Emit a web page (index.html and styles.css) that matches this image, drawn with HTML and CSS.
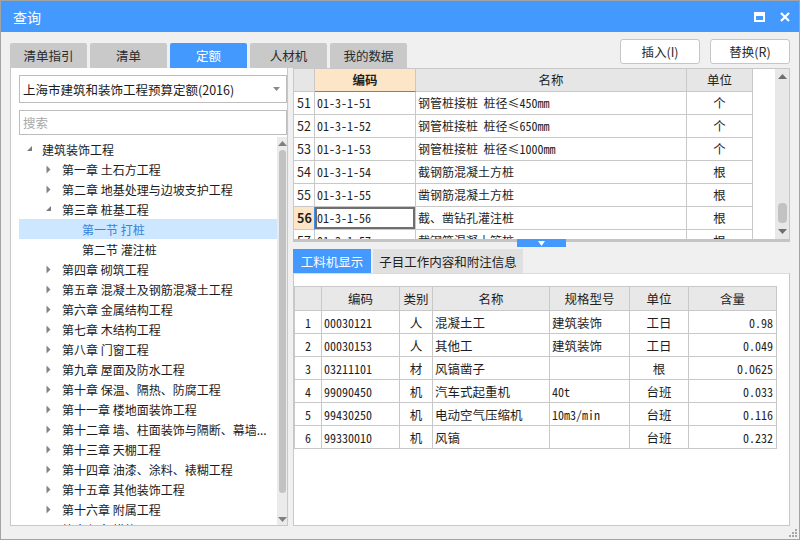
FILE: index.html
```html
<!DOCTYPE html>
<html lang="zh">
<head>
<meta charset="utf-8">
<title>查询</title>
<link rel="stylesheet" href="styles.css">
</head>
<body>
<div class="window">
  <div class="titlebar">
    <span class="title">查询</span>
    <div class="tb-icons">
      <svg class="ic-max" width="11" height="10" viewBox="0 0 11 10"><rect x="1" y="1" width="9" height="8" fill="none" stroke="#fff" stroke-width="2"/><rect x="1" y="1" width="9" height="3" fill="#fff"/></svg>
      <svg class="ic-close" width="10" height="10" viewBox="0 0 10 10"><path d="M1 1 L9 9 M9 1 L1 9" stroke="#fff" stroke-width="2.2"/></svg>
    </div>
  </div>

  <div class="toprow">
    <div class="tabs">
      <div class="tab">清单指引</div>
      <div class="tab">清单</div>
      <div class="tab active">定额</div>
      <div class="tab">人材机</div>
      <div class="tab">我的数据</div>
    </div>
    <div class="buttons">
      <div class="btn">插入(I)</div>
      <div class="btn">替换(R)</div>
    </div>
  </div>

  <div class="main">
    <div class="left">
      <div class="select">
        <span>上海市建筑和装饰工程预算定额(2016)</span>
        <svg class="sel-arrow" width="7" height="4" viewBox="0 0 7 4"><path d="M0 0 H7 L3.5 4 Z" fill="#8a8a8a"/></svg>
      </div>
      <div class="search">搜索</div>
      <div class="tree-wrap">
        <div class="tree">
          <div class="trow l0"><span class="arr"><svg width="6" height="6" viewBox="0 0 6 6"><path d="M5 0 V5 H0 Z" fill="#7c7c7c"/></svg></span><span class="tx">建筑装饰工程</span></div>
          <div class="trow l1"><span class="arr"><svg width="5" height="9" viewBox="0 0 5 9"><path d="M0.5 0.5 L4.5 4.5 L0.5 8.5 Z" fill="#858585"/></svg></span><span class="tx">第一章 土石方工程</span></div>
          <div class="trow l1"><span class="arr"><svg width="5" height="9" viewBox="0 0 5 9"><path d="M0.5 0.5 L4.5 4.5 L0.5 8.5 Z" fill="#858585"/></svg></span><span class="tx">第二章 地基处理与边坡支护工程</span></div>
          <div class="trow l1"><span class="arr"><svg width="6" height="6" viewBox="0 0 6 6"><path d="M5 0 V5 H0 Z" fill="#7c7c7c"/></svg></span><span class="tx">第三章 桩基工程</span></div>
          <div class="trow l2 sel"><span class="arr"></span><span class="tx">第一节 打桩</span></div>
          <div class="trow l2"><span class="arr"></span><span class="tx">第二节 灌注桩</span></div>
          <div class="trow l1"><span class="arr"><svg width="5" height="9" viewBox="0 0 5 9"><path d="M0.5 0.5 L4.5 4.5 L0.5 8.5 Z" fill="#858585"/></svg></span><span class="tx">第四章 砌筑工程</span></div>
          <div class="trow l1"><span class="arr"><svg width="5" height="9" viewBox="0 0 5 9"><path d="M0.5 0.5 L4.5 4.5 L0.5 8.5 Z" fill="#858585"/></svg></span><span class="tx">第五章 混凝土及钢筋混凝土工程</span></div>
          <div class="trow l1"><span class="arr"><svg width="5" height="9" viewBox="0 0 5 9"><path d="M0.5 0.5 L4.5 4.5 L0.5 8.5 Z" fill="#858585"/></svg></span><span class="tx">第六章 金属结构工程</span></div>
          <div class="trow l1"><span class="arr"><svg width="5" height="9" viewBox="0 0 5 9"><path d="M0.5 0.5 L4.5 4.5 L0.5 8.5 Z" fill="#858585"/></svg></span><span class="tx">第七章 木结构工程</span></div>
          <div class="trow l1"><span class="arr"><svg width="5" height="9" viewBox="0 0 5 9"><path d="M0.5 0.5 L4.5 4.5 L0.5 8.5 Z" fill="#858585"/></svg></span><span class="tx">第八章 门窗工程</span></div>
          <div class="trow l1"><span class="arr"><svg width="5" height="9" viewBox="0 0 5 9"><path d="M0.5 0.5 L4.5 4.5 L0.5 8.5 Z" fill="#858585"/></svg></span><span class="tx">第九章 屋面及防水工程</span></div>
          <div class="trow l1"><span class="arr"><svg width="5" height="9" viewBox="0 0 5 9"><path d="M0.5 0.5 L4.5 4.5 L0.5 8.5 Z" fill="#858585"/></svg></span><span class="tx">第十章 保温、隔热、防腐工程</span></div>
          <div class="trow l1"><span class="arr"><svg width="5" height="9" viewBox="0 0 5 9"><path d="M0.5 0.5 L4.5 4.5 L0.5 8.5 Z" fill="#858585"/></svg></span><span class="tx">第十一章 楼地面装饰工程</span></div>
          <div class="trow l1"><span class="arr"><svg width="5" height="9" viewBox="0 0 5 9"><path d="M0.5 0.5 L4.5 4.5 L0.5 8.5 Z" fill="#858585"/></svg></span><span class="tx">第十二章 墙、柱面装饰与隔断、幕墙...</span></div>
          <div class="trow l1"><span class="arr"><svg width="5" height="9" viewBox="0 0 5 9"><path d="M0.5 0.5 L4.5 4.5 L0.5 8.5 Z" fill="#858585"/></svg></span><span class="tx">第十三章 天棚工程</span></div>
          <div class="trow l1"><span class="arr"><svg width="5" height="9" viewBox="0 0 5 9"><path d="M0.5 0.5 L4.5 4.5 L0.5 8.5 Z" fill="#858585"/></svg></span><span class="tx">第十四章 油漆、涂料、裱糊工程</span></div>
          <div class="trow l1"><span class="arr"><svg width="5" height="9" viewBox="0 0 5 9"><path d="M0.5 0.5 L4.5 4.5 L0.5 8.5 Z" fill="#858585"/></svg></span><span class="tx">第十五章 其他装饰工程</span></div>
          <div class="trow l1"><span class="arr"><svg width="5" height="9" viewBox="0 0 5 9"><path d="M0.5 0.5 L4.5 4.5 L0.5 8.5 Z" fill="#858585"/></svg></span><span class="tx">第十六章 附属工程</span></div>
          <div class="trow l1"><span class="arr"><svg width="5" height="9" viewBox="0 0 5 9"><path d="M0.5 0.5 L4.5 4.5 L0.5 8.5 Z" fill="#858585"/></svg></span><span class="tx">第十七章 措施项目</span></div>
        </div>
        <div class="vscroll">
          <div class="sb-arrow"><svg width="9" height="5" viewBox="0 0 9 5"><path d="M0 5 L4.5 0 L9 5 Z" fill="#808080"/></svg></div>
          <div class="sb-thumb tall"></div>
          <div class="sb-fill"></div>
          <div class="sb-arrow"><svg width="9" height="5" viewBox="0 0 9 5"><path d="M0 0 L4.5 5 L9 0 Z" fill="#808080"/></svg></div>
        </div>
      </div>
    </div>

    <div class="right">
      <div class="grid-top">
        <div class="gt">
          <div class="gr head">
            <div class="c rn"></div>
            <div class="c code hl">编码</div>
            <div class="c name">名称</div>
            <div class="c unit">单位</div>
          </div>
          <div class="gr"><div class="c rn">51</div><div class="c code mono">01-3-1-51</div><div class="c name">钢管桩接桩&nbsp; 桩径<span class="mono">≤450mm</span></div><div class="c unit">个</div></div>
          <div class="gr"><div class="c rn">52</div><div class="c code mono">01-3-1-52</div><div class="c name">钢管桩接桩&nbsp; 桩径<span class="mono">≤650mm</span></div><div class="c unit">个</div></div>
          <div class="gr"><div class="c rn">53</div><div class="c code mono">01-3-1-53</div><div class="c name">钢管桩接桩&nbsp; 桩径<span class="mono">≤1000mm</span></div><div class="c unit">个</div></div>
          <div class="gr"><div class="c rn">54</div><div class="c code mono">01-3-1-54</div><div class="c name">截钢筋混凝土方桩</div><div class="c unit">根</div></div>
          <div class="gr"><div class="c rn">55</div><div class="c code mono">01-3-1-55</div><div class="c name">凿钢筋混凝土方桩</div><div class="c unit">根</div></div>
          <div class="gr cur"><div class="c rn">56</div><div class="c code mono">01-3-1-56</div><div class="c name">截、凿钻孔灌注桩</div><div class="c unit">根</div></div>
          <div class="gr"><div class="c rn">57</div><div class="c code mono">01-3-1-57</div><div class="c name">截钢筋混凝土管桩</div><div class="c unit">根</div></div>
        </div>
        <div class="gt-space"></div>
        <div class="vscroll2">
          <div class="sb2-arrow"><svg width="9" height="5" viewBox="0 0 9 5"><path d="M0 5 L4.5 0 L9 5 Z" fill="#6e6e6e"/></svg></div>
          <div class="sb2-fill"></div>
          <div class="sb-thumb short"></div>
          <div class="sb2-arrow low"><svg width="9" height="5" viewBox="0 0 9 5"><path d="M0 0 L4.5 5 L9 0 Z" fill="#6e6e6e"/></svg></div>
        </div>
      </div>

      <div class="splitter">
        <div class="handle"><svg width="7" height="5" viewBox="0 0 7 5"><path d="M0 0 H7 L3.5 5 Z" fill="#fff"/></svg></div>
      </div>

      <div class="btabs">
        <div class="btab active">工料机显示</div>
        <div class="btab other">子目工作内容和附注信息</div>
      </div>

      <div class="bpanel">
        <div class="bgrid">
          <div class="br head">
            <div class="d idx"></div><div class="d bcode">编码</div><div class="d kind">类别</div><div class="d bname">名称</div><div class="d spec">规格型号</div><div class="d bunit">单位</div><div class="d qty">含量</div>
          </div>
          <div class="br"><div class="d idx mono">1</div><div class="d bcode mono">00030121</div><div class="d kind">人</div><div class="d bname">混凝土工</div><div class="d spec">建筑装饰</div><div class="d bunit">工日</div><div class="d qty mono">0.98</div></div>
          <div class="br"><div class="d idx mono">2</div><div class="d bcode mono">00030153</div><div class="d kind">人</div><div class="d bname">其他工</div><div class="d spec">建筑装饰</div><div class="d bunit">工日</div><div class="d qty mono">0.049</div></div>
          <div class="br"><div class="d idx mono">3</div><div class="d bcode mono">03211101</div><div class="d kind">材</div><div class="d bname">风镐凿子</div><div class="d spec"></div><div class="d bunit">根</div><div class="d qty mono">0.0625</div></div>
          <div class="br"><div class="d idx mono">4</div><div class="d bcode mono">99090450</div><div class="d kind">机</div><div class="d bname">汽车式起重机</div><div class="d spec mono">40t</div><div class="d bunit">台班</div><div class="d qty mono">0.033</div></div>
          <div class="br"><div class="d idx mono">5</div><div class="d bcode mono">99430250</div><div class="d kind">机</div><div class="d bname">电动空气压缩机</div><div class="d spec mono">10m3/min</div><div class="d bunit">台班</div><div class="d qty mono">0.116</div></div>
          <div class="br"><div class="d idx mono">6</div><div class="d bcode mono">99330010</div><div class="d kind">机</div><div class="d bname">风镐</div><div class="d spec"></div><div class="d bunit">台班</div><div class="d qty mono">0.232</div></div>
        </div>
      </div>
    </div>
  </div>

  <svg class="grip" width="8" height="8" viewBox="0 0 8 8">
    <rect x="6" y="0" width="2" height="2" fill="#a8a8a8"/>
    <rect x="3" y="3" width="2" height="2" fill="#a8a8a8"/>
    <rect x="6" y="3" width="2" height="2" fill="#a8a8a8"/>
    <rect x="0" y="6" width="2" height="2" fill="#a8a8a8"/>
    <rect x="3" y="6" width="2" height="2" fill="#a8a8a8"/>
    <rect x="6" y="6" width="2" height="2" fill="#a8a8a8"/>
  </svg>
</div>
</body>
</html>
```

FILE: styles.css
```css
* { box-sizing: border-box; }
html, body { margin: 0; padding: 0; }
body {
  font-family: "Noto Sans CJK SC", "Microsoft YaHei", sans-serif;
  font-size: 12px;
  color: #1e1e1e;
  background: #f0f0f0;
}
.window {
  position: relative;
  width: 800px;
  height: 540px;
  border: 1px solid #a3a3a3;
  background: #f0f0f0;
  display: flex;
  flex-direction: column;
  overflow: hidden;
}
.titlebar {
  height: 31px;
  flex: none;
  background: #4499ff;
  display: flex;
  align-items: center;
  padding: 0 9px 0 12px;
}
.title { color: #fff; font-size: 14px; }
.tb-icons { margin-left: auto; display: flex; align-items: center; gap: 15px; }
.tb-icons svg { display: block; }

.toprow {
  height: 36px;
  flex: none;
  display: flex;
  padding: 0 9px;
}
.tabs { display: flex; gap: 3px; align-self: flex-end; }
.tab {
  width: 77px;
  height: 25px;
  background: #c9c9c9;
  color: #2a2a2a;
  font-size: 12.5px;
  display: flex;
  align-items: center;
  justify-content: center;
  border-radius: 2px 2px 0 0;
}
.tab.active { background: #4499ff; color: #fff; }
.buttons { margin-left: auto; display: flex; gap: 10px; padding-top: 7px; }
.btn {
  width: 80px;
  height: 25px;
  background: #fff;
  border: 1px solid #c6c6c6;
  border-radius: 3px;
  font-size: 12.5px;
  color: #2a2a2a;
  display: flex;
  align-items: center;
  justify-content: center;
}

.main {
  flex: 1;
  display: flex;
  gap: 5px;
  padding: 0 9px 13px 9px;
  min-height: 0;
}
.left {
  width: 278px;
  flex: none;
  background: #fff;
  border: 1px solid #c8c8c8;
  border-top: none;
  padding: 7px 0 0 8px;
  display: flex;
  flex-direction: column;
}
.select {
  height: 28px;
  border: 1px solid #bdbdbd;
  display: flex;
  align-items: center;
  padding: 0 6px 0 3px;
  font-size: 12.5px;
  color: #1a1a1a;
}
.sel-arrow { margin-left: auto; }
.search {
  height: 25px;
  margin-top: 7px;
  border: 1px solid #bdbdbd;
  color: #a8a8a8;
  font-size: 12.5px;
  display: flex;
  align-items: center;
  padding-left: 3px;
}
.tree-wrap {
  flex: 1;
  margin-top: 2px;
  display: flex;
  min-height: 0;
}
.tree {
  width: 258px;
  padding-top: 2px;
  overflow: hidden;
}
.trow {
  height: 20px;
  display: flex;
  align-items: center;
  white-space: nowrap;
  font-size: 12px;
  color: #1c1c1c;
  padding-right: 8px;
}
.trow.l0 { padding-left: 8px; }
.trow.l1 { padding-left: 27px; }
.trow.l2 { padding-left: 48px; }
.trow .arr { width: 15px; flex: none; display: flex; align-items: center; }
.trow.l1 .arr { width: 16px; }
.trow .arr svg { display: block; }
.trow .tx { overflow: hidden; }
.trow.sel { background: #cce7ff; color: #3783dc; }

.vscroll {
  width: 10px;
  flex: none;
  background: #ebebeb;
  display: flex;
  flex-direction: column;
  align-items: center;
}
.sb-arrow { height: 12px; flex: none; display: flex; align-items: center; justify-content: center; }
.sb-arrow svg { display: block; }
.sb-thumb { width: 7px; background: #c2c2c2; border-radius: 4px; flex: none; }
.sb-thumb.tall { height: 343px; margin-top: 1px; }
.sb-fill { flex: 1; }

.right {
  width: 497px;
  flex: none;
  display: flex;
  flex-direction: column;
}
.grid-top {
  height: 171px;
  flex: none;
  border: 1px solid #c8c8c8;
  border-bottom: none;
  background: #fff;
  display: flex;
  overflow: hidden;
}
.gt { width: 459px; flex: none; }
.gt-space { flex: 1; background: #fff; }
.gr { display: flex; height: 23px; }
.gr .c {
  height: 23px;
  border-right: 1px solid #c8c8c8;
  border-bottom: 1px solid #c8c8c8;
  line-height: 22px;
  white-space: nowrap;
  overflow: hidden;
  font-size: 12px;
}
.gr .rn { width: 21px; padding-left: 3px; font-size: 12.5px; }
.gr .code { width: 101px; padding-left: 2px; }
.gr .name { width: 271px; padding-left: 2px; }
.gr .unit { width: 66px; text-align: center; font-size: 12.5px; }
.gr.head .c { background: #e6e6e6; text-align: center; font-size: 12.5px; padding-left: 0; }
.gr.head .c.hl { background: #fde6c8; font-weight: bold; border-bottom: 1px solid #3d8ef0; }
.gr.cur .rn { background: #fde6c8; font-weight: bold; border-right: 1px solid #3d8ef0; }
.gr.cur .code { box-shadow: inset 0 0 0 2px #6f6f6f; }
.mono { font-family: "Noto Sans Mono CJK SC", "DejaVu Sans Mono", monospace; font-size: 12px; }

.vscroll2 {
  width: 14px;
  flex: none;
  background: #e8e8e8;
  display: flex;
  flex-direction: column;
  align-items: center;
}
.sb2-arrow { height: 14px; flex: none; display: flex; align-items: center; justify-content: center; }
.sb2-arrow svg { display: block; }
.sb2-fill { height: 120px; flex: none; }
.sb-thumb.short { height: 20px; width: 9px; }
.sb2-arrow.low { margin-top: auto; height: 16px; }

.splitter {
  height: 10px;
  flex: none;
  border-top: 3px solid #c4c4c4;
  display: flex;
  justify-content: center;
  align-items: flex-start;
}
.handle {
  width: 49px;
  height: 8px;
  margin-top: -3px;
  background: #4499ff;
  display: flex;
  justify-content: center;
  align-items: center;
}
.handle svg { display: block; }

.btabs { height: 24px; flex: none; display: flex; gap: 2px; }
.btab {
  height: 24px;
  padding: 0;
  background: #e0e0e0;
  font-size: 12.5px;
  color: #222;
  white-space: nowrap;
  display: flex;
  align-items: center;
  justify-content: center;
}
.btab.active { width: 78px; background: #4499ff; color: #fff; }
.btab.other { width: 150px; }

.bpanel {
  flex: 1;
  background: #fff;
  border: 1px solid #c8c8c8;
  border-top-color: #dcdcdc;
  padding-top: 12px;
}
.bgrid {
  width: 483px;
  border-left: 1px solid #c8c8c8;
  border-top: 1px solid #c8c8c8;
}
.br { display: flex; height: 23px; }
.br.head { height: 24px; }
.br .d {
  border-right: 1px solid #c8c8c8;
  border-bottom: 1px solid #c8c8c8;
  white-space: nowrap;
  overflow: hidden;
  display: flex;
  align-items: center;
  font-size: 12px;
  padding-left: 2px;
}
.br.head .d { background: #e8e8e8; justify-content: center; font-size: 12.5px; padding-left: 0; }
.br .idx { width: 27px; justify-content: center; padding-left: 0; }
.br .bcode { width: 78px; }
.br .kind { width: 33px; justify-content: center; font-size: 12.5px; padding-left: 0; }
.br .bname { width: 117px; font-size: 12.5px; }
.br .spec { width: 80px; font-size: 12.5px; }
.br .spec.mono { font-size: 12px; }
.br .bunit { width: 59px; justify-content: center; font-size: 12.5px; padding-left: 0; }
.br .qty { width: 88px; justify-content: flex-end; padding-right: 3px; }
.br.head .d.qty { justify-content: center; padding-right: 0; }

.grip { position: absolute; right: 2px; bottom: 2px; }
```
